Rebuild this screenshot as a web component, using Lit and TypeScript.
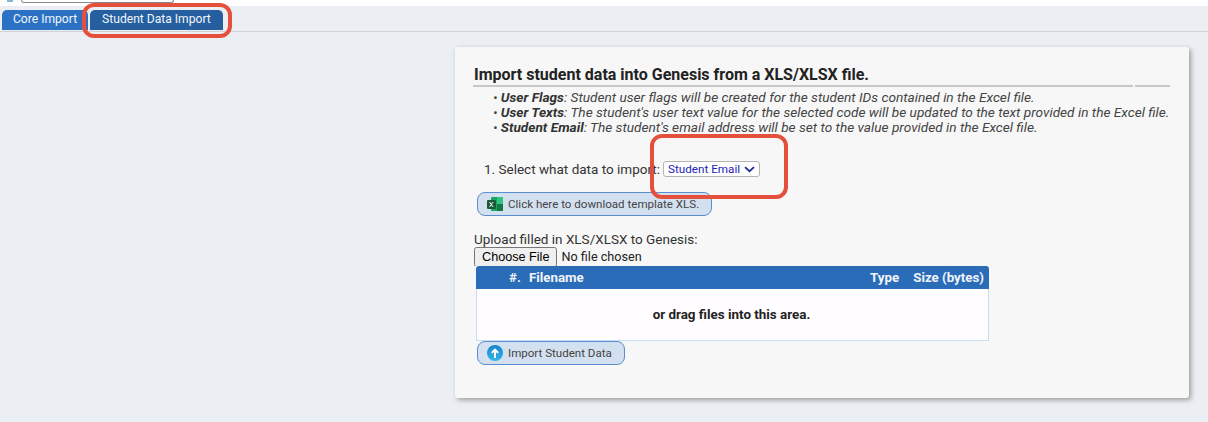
import { LitElement, html, css } from "lit";
import { customElement } from "lit/decorators.js";

@customElement("app-root")
export class AppRoot extends LitElement {
  static styles = css`
    :host { display: block; position: relative; width: 1208px; height: 422px; overflow: hidden; background: #ebeef3; font-family: Roboto, "Liberation Sans", sans-serif; color: #333; }
    .top { height: 6px; background: #fff; display: flex; padding-left: 7px; gap: 8px; }
    .star { width: 6px; height: 2px; background: #7fb6dc; }
    .search { width: 153px; height: 3px; border: 1px solid #8a8a8a; border-top: 0; border-radius: 0 0 3px 3px; box-sizing: border-box; background: #fff; }
    .tabs { height: 26px; box-sizing: border-box; padding: 4px 0 0 2px; border-bottom: 1px solid #cfd2d6; display: flex; gap: 2px; align-items: flex-start; }
    .tab { height: 20px; line-height: 19px; box-sizing: border-box; border-radius: 5px 5px 0 0; background: #2b72c4; color: #f2f6fb; font-size: 12.1px; padding: 0 11px 0 11px; }
    .tab.active { background: #255f9f; padding: 0 12px; margin-left: 0; }
    .card { margin: 15px 0 0 455px; width: 734px; height: 351px; box-sizing: border-box; background: #f7f7f7; border-radius: 3px; box-shadow: 2px 2px 5px rgba(0,0,0,.35); padding: 19px 19px 0 19px; display: flex; flex-direction: column; align-items: flex-start; }
    h1 { margin: 0; font-size: 16px; line-height: 18px; font-weight: 700; color: #222; white-space: nowrap; }
    .rule { display: flex; gap: 2px; width: 697px; height: 2px; margin: 1px 0 0 -1px; }
    .rule i { background: #c8c8c8; display: block; height: 2px; }
    .rule i:first-child { width: 660px; }
    .rule i:last-child { flex: 1; }
    ul { list-style: none; margin: 3px 0 0; padding: 0 0 0 19px; font-size: 13.65px; line-height: 15px; font-style: italic; color: #444; white-space: nowrap; }
    li b { color: #333; }
    .sel-row { display: flex; align-items: center; margin: 26px 0 0 10px; height: 16px; font-size: 13.5px; color: #333; white-space: nowrap; }
    .select { margin-left: 3px; width: 97px; height: 16px; box-sizing: border-box; background: #fff; border: 1px solid #b5b5b5; border-radius: 3px; color: #2222b8; font-size: 11.7px; line-height: 14px; padding: 0 4px 0 4px; display: flex; align-items: center; justify-content: space-between; }
    .btn { display: flex; align-items: center; box-sizing: border-box; height: 24px; background: #d3e0f0; border: 1px solid #5b8dd0; border-radius: 8px; color: #444; font-size: 11.55px; margin-left: 3px; padding-left: 9px; gap: 5px; white-space: nowrap; }
    .btn svg { flex: none; }
    .dl { width: 235px; margin-top: 15px; }
    .up { width: 148px; }
    .label { margin-top: 15px; font-size: 13.5px; line-height: 16px; color: #333; white-space: nowrap; }
    input[type=file] { font-family: Roboto, sans-serif; font-size: 12.65px; margin: 0; height: 19px; width: 300px; color: #222; display: block; }
    .table { margin-left: 2px; width: 513px; }
    .thead { height: 23px; background: #2b6cb8; border-radius: 3px 3px 0 0; color: #f0f4fa; font-size: 13.3px; font-weight: 700; display: flex; align-items: center; padding: 0 5px 0 33px; box-sizing: border-box; white-space: nowrap; }
    .thead .n { width: 20px; }
    .thead .f { flex: 1; }
    .thead .t { margin-right: 14px; }
    .tbody { height: 52px; box-sizing: border-box; background: #fffdff; border: 1px solid #c8dcf2; border-top: 0; padding-right: 2px; display: flex; align-items: center; justify-content: center; font-size: 13.4px; font-weight: 700; color: #222; }
    .mark { position: absolute; border: 4px solid #e5503c; box-sizing: border-box; }
    .m1 { left: 82px; top: 3px; width: 150px; height: 35px; border-radius: 12px; }
    .m2 { left: 650px; top: 134px; width: 138px; height: 65px; border-radius: 12px; }
  `;

  render() {
    return html`
      <div class="top"><span class="star"></span><span class="search"></span></div>
      <div class="tabs">
        <div class="tab">Core Import</div>
        <div class="tab active">Student Data Import</div>
      </div>
      <div class="card">
        <h1>Import student data into Genesis from a XLS/XLSX file.</h1>
        <div class="rule"><i></i><i></i></div>
        <ul>
          <li>• <b>User Flags</b>: Student user flags will be created for the student IDs contained in the Excel file.</li>
          <li>• <b>User Texts</b>: The student's user text value for the selected code will be updated to the text provided in the Excel file.</li>
          <li>• <b>Student Email</b>: The student's email address will be set to the value provided in the Excel file.</li>
        </ul>
        <div class="sel-row">1. Select what data to import:
          <span class="select">Student Email
            <svg width="11" height="7" viewBox="0 0 11 7"><path d="M1 1.2l4.5 4 4.5-4" fill="none" stroke="#1c2f9c" stroke-width="1.8"/></svg>
          </span>
        </div>
        <div class="btn dl">
          <svg width="16" height="16" viewBox="0 0 16 16">
            <rect x="4" y="1" width="12" height="14" rx="1" fill="#21a366"/>
            <rect x="10" y="1" width="6" height="7" fill="#33c481"/>
            <rect x="10" y="8" width="6" height="7" fill="#107c41"/>
            <rect x="0" y="4" width="9" height="9" rx="1" fill="#185c37"/>
            <path d="M2.5 6l3.6 5M6.1 6l-3.6 5" stroke="#fff" stroke-width="1"/>
          </svg>
          Click here to download template XLS.
        </div>
        <div class="label">Upload filled in XLS/XLSX to Genesis:</div>
        <input type="file" />
        <div class="table">
          <div class="thead"><span class="n">#.</span><span class="f">Filename</span><span class="t">Type</span><span>Size (bytes)</span></div>
          <div class="tbody">or drag files into this area.</div>
        </div>
        <div class="btn up">
          <svg width="16" height="16" viewBox="0 0 16 16">
            <defs><linearGradient id="g" x1="0" y1="0" x2="0" y2="1"><stop offset="0" stop-color="#1583c9"/><stop offset="1" stop-color="#35b5ea"/></linearGradient></defs>
            <circle cx="8" cy="8" r="8" fill="url(#g)"/>
            <path d="M8 13V5M4.8 8L8 4.6 11.2 8" fill="none" stroke="#fff" stroke-width="1.9"/>
          </svg>
          Import Student Data
        </div>
      </div>
      <div class="mark m1"></div>
      <div class="mark m2"></div>
    `;
  }
}
